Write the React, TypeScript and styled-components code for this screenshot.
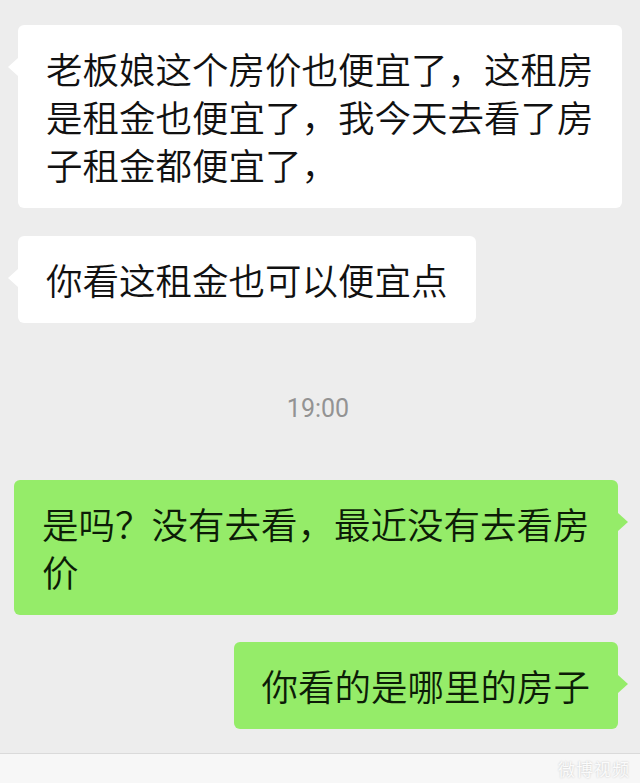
import styled, { createGlobalStyle, css } from "styled-components";

type Side = "left" | "right";

type Message =
  | { kind: "text"; side: Side; text: string; gap: number }
  | { kind: "time"; text: string; gap: number };

const messages: Message[] = [
  {
    kind: "text",
    side: "left",
    text: "老板娘这个房价也便宜了，这租房是租金也便宜了，我今天去看了房子租金都便宜了，",
    gap: 0,
  },
  { kind: "text", side: "left", text: "你看这租金也可以便宜点", gap: 28 },
  { kind: "time", text: "19:00", gap: 71 },
  {
    kind: "text",
    side: "right",
    text: "是吗？没有去看，最近没有去看房价",
    gap: 56,
  },
  { kind: "text", side: "right", text: "你看的是哪里的房子", gap: 27 },
];

export default function App() {
  return (
    <>
      <GlobalStyle />
      <Page>
        <MessageList>
          {messages.map((msg, i) =>
            msg.kind === "time" ? (
              <TimeStamp key={i} $gap={msg.gap}>
                {msg.text}
              </TimeStamp>
            ) : (
              <Row key={i} $side={msg.side} $gap={msg.gap}>
                <Bubble $side={msg.side}>{msg.text}</Bubble>
              </Row>
            )
          )}
        </MessageList>
        <InputBar>
          <Watermark>微博视频</Watermark>
        </InputBar>
      </Page>
    </>
  );
}

const GlobalStyle = createGlobalStyle`
  html, body {
    margin: 0;
    padding: 0;
    background: #ededed;
  }
  body {
    font-family: "Noto Sans CJK SC", "Noto Sans", sans-serif;
  }
`;

const Page = styled.div`
  height: 783px;
  display: flex;
  flex-direction: column;
  background: #ededed;
  overflow: hidden;
`;

const MessageList = styled.div`
  display: flex;
  flex-direction: column;
  padding-top: 25px;
`;

const Row = styled.div<{ $side: Side; $gap: number }>`
  display: flex;
  justify-content: ${(p) => (p.$side === "left" ? "flex-start" : "flex-end")};
  padding: ${(p) => (p.$side === "left" ? "0 0 0 18px" : "0 22px 0 0")};
  margin-top: ${(p) => p.$gap}px;
`;

const leftTail = css`
  left: -10px;
  border-right: 10px solid #ffffff;
`;

const rightTail = css`
  right: -10px;
  border-left: 10px solid #95ec69;
`;

const Bubble = styled.div<{ $side: Side }>`
  position: relative;
  max-width: 604px;
  box-sizing: border-box;
  padding: 19.5px 28px;
  border-radius: 6px;
  background: ${(p) => (p.$side === "left" ? "#ffffff" : "#95ec69")};
  color: ${(p) => (p.$side === "left" ? "#111111" : "#0c1c07")};
  font-size: 36.5px;
  font-weight: 350;
  line-height: 48px;
  word-break: break-all;

  &::before {
    content: "";
    position: absolute;
    top: 33px;
    width: 0;
    height: 0;
    border-top: 9px solid transparent;
    border-bottom: 9px solid transparent;
    ${(p) => (p.$side === "left" ? leftTail : rightTail)}
  }
`;

const TimeStamp = styled.div<{ $gap: number }>`
  margin-top: ${(p) => p.$gap}px;
  text-align: center;
  font-family: Roboto, "Noto Sans", sans-serif;
  font-size: 25px;
  line-height: 30px;
  color: #939393;
  padding-right: 4px;
`;

const InputBar = styled.div`
  margin-top: auto;
  height: 29px;
  border-top: 1px solid #dadada;
  background: #f7f7f7;
  display: flex;
  align-items: center;
  justify-content: flex-end;
  padding-right: 10px;
`;

const Watermark = styled.span`
  font-size: 17px;
  line-height: 20px;
  color: #fbfbfb;
  text-shadow: 0 0 2px #c4c4c4;
  letter-spacing: 1px;
`;
